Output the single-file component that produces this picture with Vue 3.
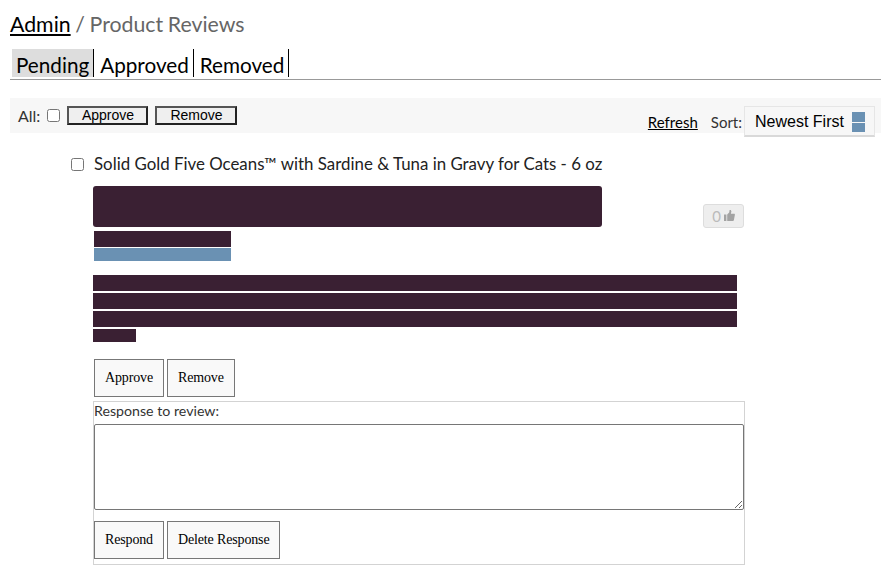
<template>
  <div class="page">
    <h1 class="title"><a href="#" class="crumb">Admin</a> / Product Reviews</h1>

    <nav class="tabs">
      <a v-for="tab in tabs" :key="tab" href="#" class="tab" :class="{ active: tab === 'Pending' }">{{ tab }}</a>
    </nav>

    <div class="toolbar">
      <div class="bulk">
        <label class="all">All: <input type="checkbox" class="check" /></label>
        <button class="bulk-btn">Approve</button>
        <button class="bulk-btn">Remove</button>
      </div>
      <div class="sorting">
        <a href="#" class="refresh">Refresh</a>
        <span class="sort-label">Sort:</span>
        <div class="sort-box">
          <span>Newest First</span>
          <span class="sort-icon"><i></i><i></i></span>
        </div>
      </div>
    </div>

    <section class="review">
      <div class="product">
        <input type="checkbox" class="check" />
        <span>Solid Gold Five Oceans™ with Sardine &amp; Tuna in Gravy for Cats - 6 oz</span>
      </div>

      <div class="review-body">
        <div class="head">
          <div class="redact headline"></div>
          <div class="likes">
            <span>0</span>
            <svg width="11" height="11" viewBox="0 0 11 11"><path d="M0 4.5h2.4V11H0zM3.2 4.5 5.2 2.4 5.6 0h1.2l.6 1.2-.5 2.5h3.2c.6 0 .9.5.8 1L9.9 10c-.1.6-.4 1-1 1H3.2z" fill="#a3a3a3" /></svg>
          </div>
        </div>

        <div class="redact author"></div>
        <div class="stars"></div>

        <div class="text-lines">
          <div class="redact line"></div>
          <div class="redact line"></div>
          <div class="redact line"></div>
          <div class="redact line short"></div>
        </div>

        <div class="actions">
          <button class="action-btn">Approve</button>
          <button class="action-btn">Remove</button>
        </div>

        <div class="response">
          <label class="response-label">Response to review:</label>
          <textarea class="response-input"></textarea>
          <div class="actions respond">
            <button class="action-btn">Respond</button>
            <button class="action-btn">Delete Response</button>
          </div>
        </div>
      </div>
    </section>
  </div>
</template>

<script setup>
const tabs = ['Pending', 'Approved', 'Removed'];
</script>

<style>
html,
body {
  margin: 0;
  background: #fff;
}
</style>

<style scoped>
.page {
  font-family: "Lato", sans-serif;
  color: #333;
  padding: 10px 0 0 10px;
  box-sizing: border-box;
  height: 578px;
  overflow: hidden;
}

.title {
  margin: 0;
  font-size: 21.3px;
  font-weight: 400;
  line-height: 28px;
  word-spacing: -0.8px;
  color: #666;
}

.crumb {
  color: #000;
  text-decoration: underline;
}

.tabs {
  display: flex;
  margin-top: 11px;
  padding: 0 0 2px 2px;
  border-bottom: 1px solid #999;
}

.tab {
  height: 28px;
  line-height: 32px;
  padding: 0 4px;
  font-size: 20.7px;
  color: #000;
  text-decoration: none;
  border-right: 1px solid #000;
  margin-right: 2px;
}

.tab.active {
  background: #ddd;
}

.toolbar {
  display: flex;
  justify-content: space-between;
  height: 35px;
  margin-top: 18px;
  background: #f7f7f7;
}

.bulk {
  display: flex;
  align-items: flex-start;
  padding: 8px 0 0 8px;
}

.all {
  font-size: 16px;
  line-height: 20px;
  margin-right: 7px;
}

.check {
  width: 13px;
  height: 13px;
  margin: 0;
}

.all .check {
  margin-left: 3px;
}

.bulk-btn {
  width: 81px;
  height: 19px;
  padding: 0;
  margin-right: 7px;
  font-family: "Liberation Sans", sans-serif;
  font-size: 14px;
  line-height: 15px;
  color: #000;
  background: #efefef;
  border: 2px solid;
  border-color: #555 #222 #222 #555;
}

.bulk-btn + .bulk-btn {
  width: 82px;
}

.sorting {
  display: flex;
  align-items: flex-start;
  padding: 8px 6px 0 0;
}

.refresh {
  margin-top: 7px;
  font-size: 15px;
  line-height: 18px;
  color: #000;
  text-decoration: underline;
}

.sort-label {
  margin: 7px 2px 0 13px;
  font-size: 15px;
  line-height: 18px;
}

.sort-box {
  display: flex;
  align-items: center;
  justify-content: space-between;
  width: 131px;
  height: 31px;
  box-sizing: border-box;
  padding: 1px 9px 0 10px;
  font-family: "Liberation Sans", sans-serif;
  font-size: 16px;
  color: #000;
  background: #f7f7f7;
  border: 1px solid #e6e6e6;
  border-bottom: 2px solid #d9d9d9;
}

.sort-icon {
  display: flex;
  flex-direction: column;
  gap: 1px;
}

.sort-icon i {
  display: block;
  width: 13px;
  height: 9px;
  background: #6a91b3;
}

.sort-icon i:first-child {
  height: 10px;
}

.review {
  margin: 21px 0 0 0;
}

.product {
  display: flex;
  align-items: center;
  gap: 10px;
  margin-left: 61px;
  font-size: 16.87px;
  line-height: 20px;
  color: #222;
}

.review-body {
  width: 652px;
  margin: 12px 0 0 83px;
}

.head {
  display: flex;
  justify-content: space-between;
  align-items: flex-start;
  width: 651px;
}

.redact {
  background: #3a2033;
}

.headline {
  width: 509px;
  height: 41px;
  border-radius: 3px;
}

.likes {
  display: flex;
  align-items: center;
  justify-content: center;
  gap: 3px;
  width: 41px;
  height: 24px;
  box-sizing: border-box;
  margin: 18px 0 0 0;
  padding-bottom: 1px;
  font-size: 15px;
  color: #bbb;
  background: #eee;
  border: 1px solid #ddd;
  border-radius: 3px;
}

.author {
  width: 137px;
  height: 16px;
  margin: 3px 0 0 1px;
}

.stars {
  width: 137px;
  height: 13px;
  margin: 1px 0 0 1px;
  background: #6a91b3;
}

.text-lines {
  margin-top: 14px;
}

.line {
  width: 644px;
  height: 16px;
  margin-bottom: 2px;
}

.line.short {
  width: 43px;
  height: 13px;
  margin-bottom: 0;
}

.actions {
  display: flex;
  gap: 3px;
  margin: 17px 0 0 1px;
}

.action-btn {
  height: 38px;
  padding: 0 10px;
  font-family: "Liberation Serif", serif;
  font-size: 14px;
  letter-spacing: -0.15px;
  color: #000;
  background: #f9f9f9;
  border: 1px solid #777;
}

.actions .action-btn:first-child {
  width: 70px;
  padding: 0;
}

.response {
  margin-top: 4px;
  width: 652px;
  box-sizing: border-box;
  height: 164px;
  border: 1px solid #d3d3d3;
}

.response-label {
  display: block;
  font-size: 14.2px;
  line-height: 18px;
  color: #333;
}

.response-input {
  display: block;
  width: 650px;
  height: 86px;
  box-sizing: border-box;
  margin: 4px 0 0 0;
  border: 1px solid #767676;
  border-radius: 2px;
}

.actions.respond {
  margin: 11px 0 0 0;
}
</style>
